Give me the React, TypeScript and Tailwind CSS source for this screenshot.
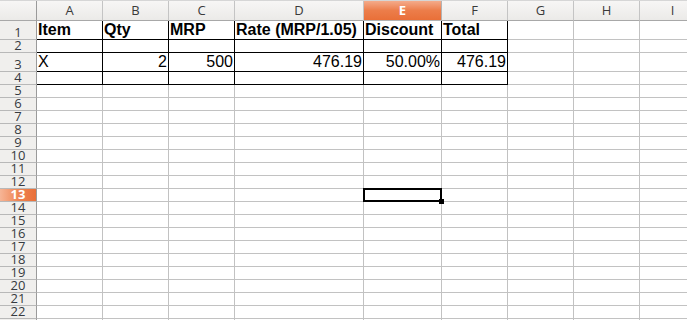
import React from 'react';

const colLetters = ['A', 'B', 'C', 'D', 'E', 'F', 'G', 'H', 'I'];
const colWidths = ['w-[66px]', 'w-[66px]', 'w-[66px]', 'w-[129px]', 'w-[78px]', 'w-[66px]', 'w-[66px]', 'w-[66px]', 'w-[66px]'];

type Cell = { text: string; bold?: boolean; right?: boolean };

// rows 1-4 with content, everything else is blank
const data: Record<number, Cell[]> = {
    1: [
        { text: 'Item', bold: true },
        { text: 'Qty', bold: true },
        { text: 'MRP', bold: true },
        { text: 'Rate (MRP/1.05)', bold: true },
        { text: 'Discount', bold: true },
        { text: 'Total', bold: true },
    ],
    3: [
        { text: 'X' },
        { text: '2', right: true },
        { text: '500', right: true },
        { text: '476.19', right: true },
        { text: '50.00%', right: true },
        { text: '476.19', right: true },
    ],
};

const rowHeight = (r: number) => (r === 1 || r === 3 ? 'h-[19px]' : 'h-[13px]');

function HeaderRow() {
    return (
        <div className="flex h-[21px] border-t border-[#d6d6d6] font-['Open_Sans',sans-serif]">
            <div className="w-[37px] shrink-0 border-r border-b border-r-[#9a9a9a] border-b-[#a8a8a8] bg-gradient-to-b from-[#f7f6f5] to-[#ebeae8]"></div>
            {colLetters.map((l, i) =>
                l === 'E' ? (
                    <div
                        key={l}
                        className={`${colWidths[i]} shrink-0 border-r border-b border-[#b3b3b3] bg-gradient-to-b from-[#f4ab8a] via-[#ec7d4a] to-[#e96f38] flex items-center justify-center text-[13px] leading-[19px] font-bold text-white`}
                    >
                        {l}
                    </div>
                ) : (
                    <div
                        key={l}
                        className={`${colWidths[i]} shrink-0 border-r border-b border-r-[#c4c4c4] border-b-[#a8a8a8] bg-gradient-to-b from-[#f7f6f5] to-[#ebeae8] flex items-center justify-center text-[13px] leading-[19px] text-[#3a3a3a]`}
                    >
                        {l}
                    </div>
                ),
            )}
        </div>
    );
}

function Row({ r }: { r: number }) {
    const cells = data[r] || [];
    const boxed = r <= 4;
    const selected = r === 13;
    return (
        <div className={`flex ${rowHeight(r)}`}>
            {selected ? (
                <div className="w-[37px] shrink-0 border-r border-b border-r-[#9a9a9a] border-b-[#b8b8b8] bg-gradient-to-r from-[#f6b596] via-[#ee8553] to-[#e96f38] flex items-end justify-center font-['Open_Sans',sans-serif] text-[13px] leading-[13px] font-bold text-white">
                    {r}
                </div>
            ) : (
                <div className="w-[37px] shrink-0 border-r border-b border-r-[#9a9a9a] border-b-[#b8b8b8] bg-[#f0efed] flex items-end justify-center font-['Open_Sans',sans-serif] text-[13px] leading-[13px] text-[#363a40]">
                    {r}
                </div>
            )}
            {colLetters.map((l, i) => {
                const cell = cells[i];
                const black = boxed && i < 6;
                return (
                    <div
                        key={l}
                        className={`${colWidths[i]} shrink-0 relative border-r border-b ${black ? 'border-black' : 'border-[#c2c2c2]'} flex items-end ${cell?.right ? 'justify-end pr-[1px]' : 'pl-[1px]'} text-[16px] leading-[18px] text-black whitespace-nowrap ${cell?.bold ? 'font-bold' : ''}`}
                    >
                        {cell?.text}
                        {selected && l === 'E' && (
                            <>
                                <div className="absolute -left-px -top-px w-[79px] h-[14px] border-2 border-black z-10"></div>
                                <div className="absolute left-[75px] top-[10px] w-[5px] h-[5px] bg-black z-20"></div>
                            </>
                        )}
                    </div>
                );
            })}
        </div>
    );
}

export default function App() {
    const rows = Array.from({ length: 23 }, (_, i) => i + 1);
    return (
        <div
            className="w-[687px] h-[320px] overflow-hidden bg-white"
            style={{ fontFamily: '"Liberation Sans", Arial, sans-serif' }}
        >
            <div className="w-[706px]">
                <HeaderRow />
                {rows.map((r) => (
                    <Row key={r} r={r} />
                ))}
            </div>
        </div>
    );
}
